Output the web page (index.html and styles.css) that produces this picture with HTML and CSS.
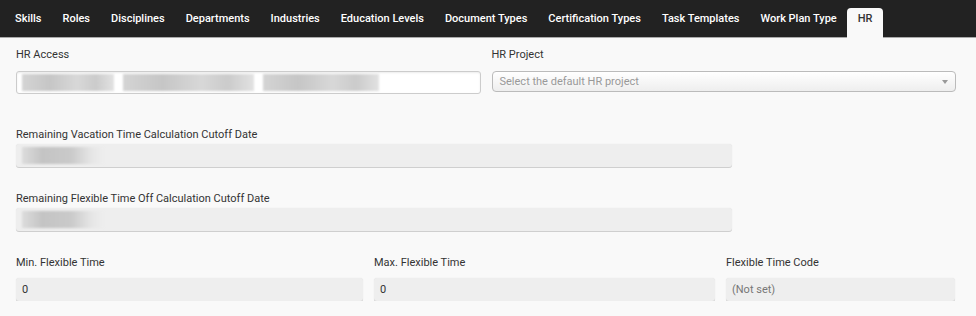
FILE: index.html
```html
<!DOCTYPE html>
<html lang="en">
<head>
  <meta charset="UTF-8" />
  <title>Settings - HR</title>
  <link rel="stylesheet" href="styles.css">
</head>
<body>
  <nav class="tabs">
    <a class="tab">Skills</a>
    <a class="tab">Roles</a>
    <a class="tab">Disciplines</a>
    <a class="tab">Departments</a>
    <a class="tab">Industries</a>
    <a class="tab">Education Levels</a>
    <a class="tab">Document Types</a>
    <a class="tab">Certification Types</a>
    <a class="tab">Task Templates</a>
    <a class="tab">Work Plan Type</a>
    <a class="tab active">HR</a>
  </nav>

  <div class="form">
    <div class="row row-two">
      <div class="field">
        <label>HR Access</label>
        <div class="input input-white">
          <span class="blur b1"></span>
          <span class="blur b2"></span>
          <span class="blur b3"></span>
        </div>
      </div>
      <div class="field">
        <label>HR Project</label>
        <div class="select">
          <span>Select the default HR project</span>
          <span class="caret"></span>
        </div>
      </div>
    </div>

    <div class="row row-wide">
      <div class="field">
        <label>Remaining Vacation Time Calculation Cutoff Date</label>
        <div class="input"><span class="blur short"></span></div>
      </div>
    </div>

    <div class="row row-wide second">
      <div class="field">
        <label>Remaining Flexible Time Off Calculation Cutoff Date</label>
        <div class="input"><span class="blur short"></span></div>
      </div>
    </div>

    <div class="row row-three">
      <div class="field">
        <label>Min. Flexible Time</label>
        <div class="input">0</div>
      </div>
      <div class="field">
        <label>Max. Flexible Time</label>
        <div class="input">0</div>
      </div>
      <div class="field">
        <label>Flexible Time Code</label>
        <div class="input muted">(Not set)</div>
      </div>
    </div>
  </div>
</body>
</html>
```

FILE: styles.css
```css
body {
  margin: 0;
  background: #f9f9f9;
  font-family: 'Roboto', 'Liberation Sans', sans-serif;
  color: #333;
}
.tabs {
  display: flex;
  align-items: flex-end;
  height: 38px;
  padding-left: 4px;
  background: #222;
  border-bottom: 1px solid #aaa;
  box-sizing: border-box;
}
.tab {
  padding: 0 10px 0 11px;
  height: 29px;
  line-height: 22px;
  font-size: 11px;
  font-weight: 500;
  color: #fff;
  cursor: pointer;
}
.tab.active {
  padding: 0 11px;
  background: #f9f9f9;
  color: #333;
  border-radius: 4px 4px 0 0;
  height: 30px;
  margin-bottom: -1px;
}
.form {
  padding: 10px 20px 0 16px;
}
.row {
  display: grid;
  column-gap: 11px;
}
.row-two {
  grid-template-columns: 1fr 1fr;
}
.row-wide {
  grid-template-columns: 716px;
  margin-top: 34px;
}
.row-wide.second {
  margin-top: 25px;
}
.row-three {
  grid-template-columns: 347px 341px 229px;
  margin-top: 25px;
}
label {
  display: block;
  font-size: 11px;
  line-height: 14px;
  color: #333;
}
.row-two label {
  margin-bottom: 9px;
}
.row-three label {
  margin-bottom: 8px;
}
.row-wide label {
  margin-bottom: 2px;
}
.input {
  display: flex;
  align-items: center;
  gap: 9px;
  height: 23px;
  padding: 0 6px;
  background: #eee;
  border-radius: 3px;
  box-shadow: 0 1px 0 #cfcfcf, 0 0 1px #ddd;
  font-size: 11px;
  color: #333;
  box-sizing: border-box;
}
.input.muted {
  color: #777;
}
.input-white {
  background: #fff;
  border: 1px solid #ccc;
  box-shadow: inset 0 1px 2px rgba(0, 0, 0, 0.08);
  padding: 0 5px;
}
.blur {
  height: 17px;
  background: linear-gradient(90deg, #d4d4d4, #c6c6c6 30%, #d8d8d8 60%, #cbcbcb 80%, #e2e2e2);
  filter: blur(1px);
}
.b1 { width: 92px; }
.b2 { width: 131px; }
.b3 { width: 116px; }
.blur.short {
  width: 82px;
  background: linear-gradient(90deg, #dcdcdc, #c4c4c4 25%, #cacaca 60%, #e6e6e6 85%, #eee);
}
.select {
  display: flex;
  align-items: center;
  justify-content: space-between;
  height: 21px;
  padding: 0 6px 0 7px;
  background: linear-gradient(#fff, #eee);
  border: 1px solid #bbb;
  border-radius: 4px;
  font-size: 11px;
  color: #999;
  box-sizing: border-box;
}
.caret {
  width: 0;
  height: 0;
  border-left: 3px solid transparent;
  border-right: 3px solid transparent;
  border-top: 4px solid #999;
  margin-right: 1px;
}
```
